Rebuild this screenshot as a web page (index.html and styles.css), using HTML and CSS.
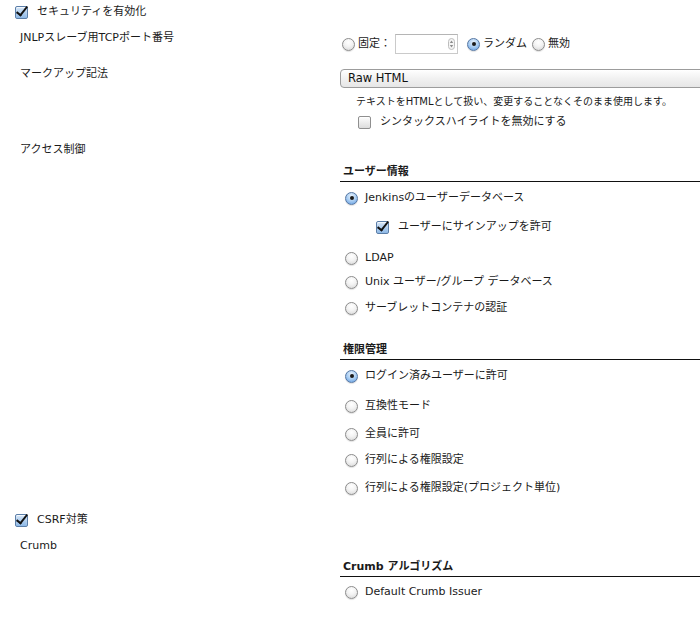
FILE: index.html
```html
<!DOCTYPE html>
<html lang="ja">
<head>
<meta charset="utf-8">
<link rel="stylesheet" href="styles.css">
</head>
<body>
<div class="page">
  <div class="row row-security">
    <label class="cb-line"><span class="cb checked"></span><span>セキュリティを有効化</span></label>
  </div>

  <div class="row row-jnlp">
    <div class="lbl">JNLPスレーブ用TCPポート番号</div>
    <div class="val port">
      <span class="rd"></span><span class="t">固定：</span>
      <span class="num"><span class="spin"><svg width="7" height="12" viewBox="0 0 7 12"><rect x="0.5" y="0.5" width="6" height="11" rx="3" fill="#f4f4f4" stroke="#bdbdbd"/><path d="M3.5 2.5 L5.2 5 H1.8 Z" fill="#8a8a8a"/><path d="M3.5 9.5 L5.2 7 H1.8 Z" fill="#8a8a8a"/></svg></span></span>
      <span class="rd on"></span><span class="t">ランダム</span>
      <span class="rd gap"></span><span class="t">無効</span>
    </div>
  </div>

  <div class="row row-markup">
    <div class="lbl">マークアップ記法</div>
    <div class="val"><div class="select">Raw HTML</div></div>
  </div>

  <div class="row row-desc">
    <div class="lbl"></div>
    <div class="val desc">テキストをHTMLとして扱い、変更することなくそのまま使用します。</div>
  </div>

  <div class="row row-syntax">
    <div class="lbl"></div>
    <div class="val"><label class="cb-line syntax"><span class="cb"></span><span>シンタックスハイライトを無効にする</span></label></div>
  </div>

  <div class="row row-access">
    <div class="lbl">アクセス制御</div>
    <div class="val">
      <div class="sec-head first">ユーザー情報</div>
      <div class="opt o1"><span class="rd on"></span><span>Jenkinsのユーザーデータベース</span></div>
      <div class="opt o2 nested"><span class="cb checked"></span><span>ユーザーにサインアップを許可</span></div>
      <div class="opt o3"><span class="rd"></span><span>LDAP</span></div>
      <div class="opt o4"><span class="rd"></span><span>Unix ユーザー/グループ データベース</span></div>
      <div class="opt o5"><span class="rd"></span><span>サーブレットコンテナの認証</span></div>

      <div class="sec-head second">権限管理</div>
      <div class="opt p1"><span class="rd on"></span><span>ログイン済みユーザーに許可</span></div>
      <div class="opt p2"><span class="rd"></span><span>互換性モード</span></div>
      <div class="opt p3"><span class="rd"></span><span>全員に許可</span></div>
      <div class="opt p4"><span class="rd"></span><span>行列による権限設定</span></div>
      <div class="opt p5"><span class="rd"></span><span>行列による権限設定(プロジェクト単位)</span></div>
    </div>
  </div>

  <div class="row row-csrf">
    <label class="cb-line"><span class="cb checked"></span><span>CSRF対策</span></label>
  </div>

  <div class="row row-crumb">
    <div class="lbl">Crumb</div>
    <div class="val">
      <div class="sec-head third">Crumb アルゴリズム</div>
      <div class="opt c1"><span class="rd"></span><span>Default Crumb Issuer</span></div>
    </div>
  </div>
</div>
</body>
</html>
```

FILE: styles.css
```css
html, body {
  margin: 0;
  padding: 0;
  background: #fff;
  overflow: hidden;
}
body {
  font-family: "DejaVu Sans", "Noto Sans CJK JP", sans-serif;
  font-size: 11px;
  line-height: 16px;
  color: #1a1a1a;
  width: 700px;
  height: 623px;
}
.page {
  width: 700px;
}
.row {
  display: grid;
  grid-template-columns: 340px 360px;
}
.lbl {
  padding-left: 20px;
}
.val {
  min-width: 0;
}

/* checkbox */
.cb {
  display: inline-block;
  width: 11px;
  height: 11px;
  border: 1px solid #8f8f8f;
  border-radius: 2px;
  background: linear-gradient(#fdfdfd, #dcdcdc);
  box-shadow: inset 0 1px 1px rgba(255,255,255,0.8);
  position: relative;
  flex: none;
}
.cb.checked {
  background: linear-gradient(#d6e6f7, #8db8e6);
  border-color: #5b7ea8;
}
.cb.checked::after {
  content: "";
  position: absolute;
  left: 3px;
  top: -3px;
  width: 4px;
  height: 10px;
  border-right: 2.5px solid #111;
  border-bottom: 2.5px solid #111;
  transform: rotate(38deg);
}
.cb-line {
  display: flex;
  align-items: center;
  gap: 9px;
}

/* radio */
.rd {
  display: inline-block;
  width: 11px;
  height: 11px;
  border: 1px solid #8c8c8c;
  border-radius: 50%;
  background: radial-gradient(circle at 50% 30%, #ffffff 0%, #f3f3f3 45%, #d4d4d4 100%);
  box-shadow: 0 1px 1px rgba(0,0,0,0.12);
  position: relative;
  flex: none;
}
.rd.on {
  background: radial-gradient(circle at 50% 30%, #e9f3fd 0%, #a9cdf2 50%, #5f9ae0 100%);
  border-color: #5677a3;
}
.rd.on::after {
  content: "";
  position: absolute;
  left: 3.5px;
  top: 3.5px;
  width: 4px;
  height: 4px;
  border-radius: 50%;
  background: #1a1a1a;
}

/* row 1 */
.row-security {
  display: block;
  height: 24px;
  padding-left: 15px;
  box-sizing: border-box;
  padding-top: 4px;
}

/* JNLP row */
.row-jnlp {
  height: 36px;
}
.row-jnlp .lbl {
  padding-top: 6px;
}
.port {
  display: flex;
  align-items: center;
  padding-top: 10px;
  padding-left: 2px;
  height: 20px;
}
.port .t {
  margin-left: 3px;
}
.num {
  display: inline-block;
  box-sizing: border-box;
  width: 63px;
  height: 20px;
  border: 1px solid #cacaca;
  border-top-color: #b5b5b5;
  margin-left: 4px;
  margin-right: 9px;
  position: relative;
  background: #fff;
}
.spin {
  position: absolute;
  right: 2px;
  top: 3px;
  line-height: 0;
}
.rd.gap {
  margin-left: 5px;
}

/* markup row */
.row-markup {
  height: 32px;
}
.row-markup .lbl {
  padding-top: 6px;
}
.select {
  margin-top: 9px;
  width: 380px;
  box-sizing: border-box;
  height: 19px;
  border: 1px solid #9c9c9c;
  border-radius: 4px;
  background: linear-gradient(#ffffff, #f1f1f1 50%, #e6e6e6);
  padding-left: 7px;
  line-height: 17px;
  font-size: 11.5px;
  color: #111;
}

/* description */
.row-desc {
  height: 18px;
}
.desc {
  padding-top: 3px;
  padding-left: 16px;
  font-size: 10px;
  line-height: 14px;
}

/* syntax */
.row-syntax {
  height: 24px;
}
.syntax {
  margin-top: 4px;
  margin-left: 18px;
  gap: 9px;
}

/* access */
.row-access .lbl {
  padding-top: 8px;
}
.sec-head {
  font-weight: bold;
  padding-left: 3px;
  padding-bottom: 1px;
  border-bottom: 1px solid #111;
  font-size: 11px;
}
.sec-head.first { margin-top: 30px; }
.sec-head.second { margin-top: 26px; }
.sec-head.third { margin-top: 27px; }

.opt {
  display: flex;
  align-items: center;
  gap: 7px;
  padding-left: 5px;
}
.opt.nested {
  padding-left: 36px;
  gap: 9px;
}
.o1 { margin-top: 8px; }
.o2 { margin-top: 13px; }
.o3 { margin-top: 15px; }
.o4 { margin-top: 8px; }
.o5 { margin-top: 10px; }
.p1 { margin-top: 8px; }
.p2 { margin-top: 14px; }
.p3 { margin-top: 12px; }
.p4 { margin-top: 10px; }
.p5 { margin-top: 12px; }
.c1 { margin-top: 7px; }

/* csrf */
.row-csrf {
  display: block;
  padding-left: 15px;
  padding-top: 16px;
  height: 36px;
  box-sizing: border-box;
}
.row-crumb .lbl {
  padding-top: 6px;
}
```
